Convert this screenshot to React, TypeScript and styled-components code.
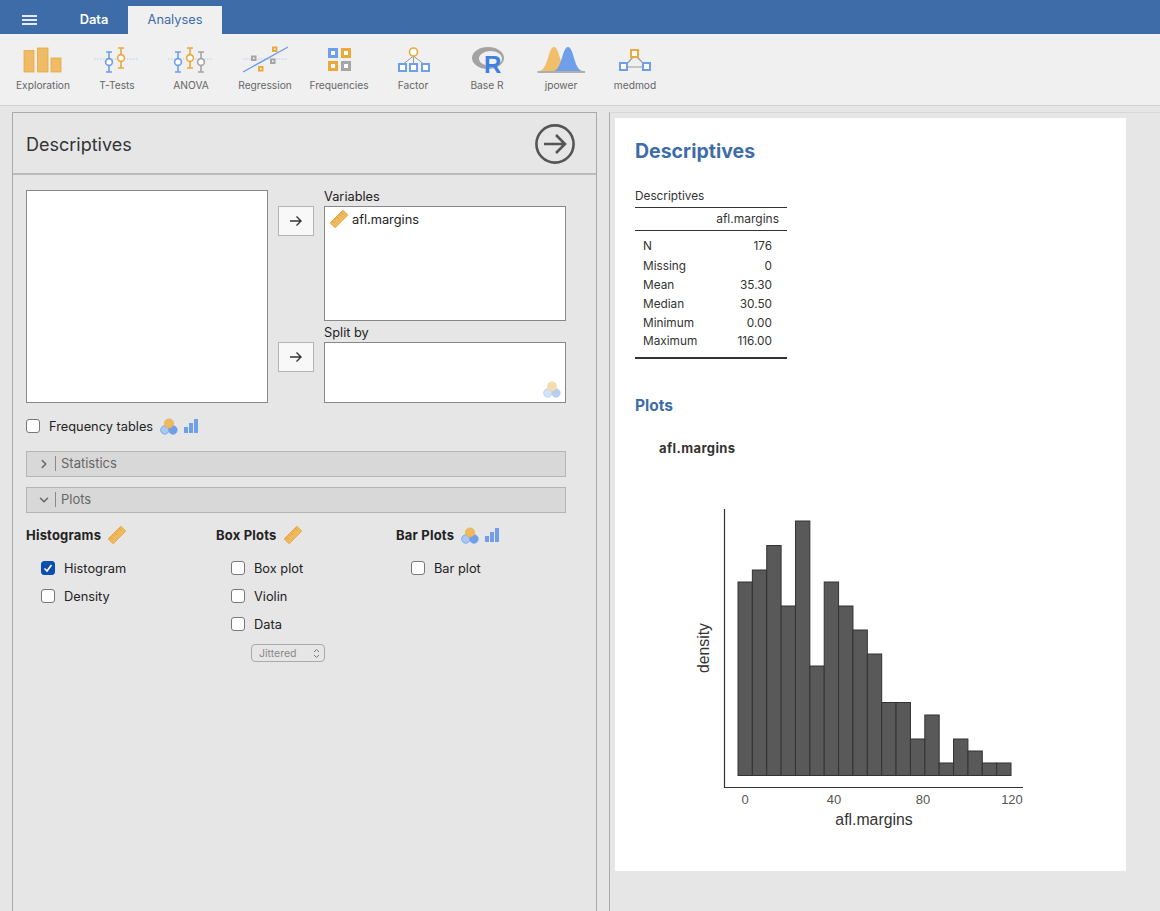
import React from "react";
import styled, { createGlobalStyle } from "styled-components";
import { ChevronDown, ChevronRight } from "lucide-react";

const GlobalStyle = createGlobalStyle`
  html, body {
    margin: 0;
    padding: 0;
    height: 911px;
    overflow: hidden;
    background: #e6e6e6;
    font-family: Inter, "Liberation Sans", sans-serif;
  }
  * { box-sizing: border-box; }
`;

const BLUE = "#6e9fe8";
const ORANGE = "#e9a93c";
const GREY = "#a5a5a5";

const TopBar = styled.header`
  height: 34px;
  background: #3e6ca8;
  display: flex;
  align-items: flex-end;
`;

const Burger = styled.div`
  width: 60px;
  height: 28px;
  padding: 9px 0 0 22px;
  display: flex;
  flex-direction: column;
  gap: 2.2px;
  span {
    display: block;
    width: 15px;
    height: 2px;
    background: #e4ebf4;
  }
`;

const Tab = styled.div<{ $active?: boolean }>`
  width: ${(p) => (p.$active ? "94px" : "68px")};
  height: 28px;
  display: flex;
  align-items: center;
  justify-content: center;
  font-size: 12.8px;
  font-weight: ${(p) => (p.$active ? 400 : 600)};
  color: ${(p) => (p.$active ? "#3e6ca8" : "#fff")};
  background: ${(p) => (p.$active ? "#f0f0f0" : "transparent")};
  padding-bottom: 2px;
`;

const Toolbar = styled.nav`
  height: 72px;
  background: #f0f0f0;
  border-bottom: 1px solid #d0d0d0;
  padding-left: 6px;
  display: flex;
`;

const ToolItem = styled.div`
  width: 74px;
  display: flex;
  flex-direction: column;
  align-items: center;
  padding-top: 10px;
  font-size: 10.2px;
  color: #666;
  svg { display: block; margin-bottom: -1.5px; }
`;

const Main = styled.main`
  display: flex;
  height: 805px;
`;

const OptionsPanel = styled.section`
  width: 585px;
  margin: 6px 0 0 12px;
  border: 1px solid #aaa;
  border-bottom: none;
  padding-bottom: 20px;
`;

const PanelHead = styled.div`
  height: 62px;
  border-bottom: 2px solid #bbb;
  padding: 1px 20px 0 13px;
  display: flex;
  align-items: center;
  justify-content: space-between;
  h2 {
    margin: 2px 0 0;
    font-size: 18px;
    font-weight: 400;
    color: #333;
  }
`;

const PanelBody = styled.div`
  padding: 15px 30px 0 13px;
`;

const Transfer = styled.div`
  display: grid;
  grid-template-columns: 242px 56px 242px;
  grid-template-rows: 136px 77px;
`;

const ListBox = styled.div<{ $h?: number }>`
  background: #fff;
  border: 1px solid #888;
  height: ${(p) => p.$h ?? 213}px;
  position: relative;
`;

const SourceBox = styled(ListBox)`
  grid-row: 1 / 3;
`;

const ArrowCell = styled.div`
  padding: 16px 0 0 10px;
`;

const ArrowButton = styled.div`
  width: 36px;
  height: 30px;
  background: #f8f8f8;
  border: 1px solid #b5b5b5;
  display: flex;
  align-items: center;
  justify-content: center;
`;

const TargetLabel = styled.div`
  height: 16px;
  font-size: 12.8px;
  line-height: 14px;
  color: #222;
`;

const VarRow = styled.div`
  display: flex;
  align-items: center;
  gap: 4px;
  padding: 3px 0 0 5px;
  font-size: 12.8px;
  color: #222;
`;

const HintIcon = styled.div`
  position: absolute;
  right: 4px;
  bottom: 4px;
  opacity: 0.5;
  line-height: 0;
`;

const CheckRow = styled.label<{ $indent?: number }>`
  display: flex;
  align-items: center;
  height: 28px;
  padding-left: ${(p) => p.$indent ?? 0}px;
  font-size: 12.8px;
  color: #222;
`;

const Box = styled.span<{ $on?: boolean }>`
  width: 14px;
  height: 14px;
  border-radius: 3px;
  border: 1px solid ${(p) => (p.$on ? "#0a4fae" : "#777")};
  background: ${(p) => (p.$on ? "#0a4fae" : "#fff")};
  margin-right: 9px;
  display: flex;
  align-items: center;
  justify-content: center;
  flex: none;
`;

const IconPair = styled.span<{ $flush?: boolean }>`
  display: inline-flex;
  align-items: center;
  gap: 6px;
  margin-left: ${(p) => (p.$flush ? 0 : 7)}px;
`;

const FreqRow = styled(CheckRow)`
  margin-top: 9px;
`;

const Section = styled.div`
  height: 26px;
  margin-top: 10px;
  background: #d8d8d8;
  border: 1px solid #b5b5b5;
  display: flex;
  align-items: center;
  padding: 0 0 1px 10px;
  font-size: 13px;
  color: #666;
  svg { margin-right: 4px; }
  span {
    border-left: 1px solid #888;
    padding-left: 5px;
    line-height: 15px;
  }
`;

const FirstSection = styled(Section)`
  margin-top: 11px;
`;

const PlotColumns = styled.div`
  display: grid;
  grid-template-columns: 190px 180px 1fr;
  margin-top: 12px;
`;

const ColHead = styled.div`
  display: flex;
  align-items: center;
  height: 20px;
  gap: 7px;
  margin-bottom: 9px;
  font-size: 13px;
  letter-spacing: 0.2px;
  font-weight: 700;
  color: #222;
`;

const Dropdown = styled.div`
  margin: 6px 0 0 35px;
  width: 74px;
  height: 18px;
  border: 1px solid #aaa;
  border-radius: 4px;
  padding: 0 4px 0 7px;
  font-size: 10.5px;
  color: #888;
  display: flex;
  align-items: center;
  justify-content: space-between;
`;

const ResultsPane = styled.section`
  width: 551px;
  margin: 6px 0 0 12px;
  border-left: 1px solid #aaa;
  border-top: 1px solid #d8d8d8;
  padding: 5px 0 0 5px;
`;

const Sheet = styled.article`
  width: 511px;
  height: 753px;
  background: #fff;
  padding: 21px 0 0 20px;
`;

const Title = styled.h1`
  margin: 0;
  font-size: 19.5px;
  line-height: 24px;
  font-weight: 700;
  color: #3e6ca8;
`;

const DataTable = styled.table`
  margin-top: 22px;
  width: 152px;
  border-collapse: collapse;
  font-size: 11.8px;
  color: #333;
  caption {
    text-align: left;
    height: 23px;
    line-height: 22px;
    border-bottom: 1px solid #333;
  }
  th {
    font-size: 12px;
    font-weight: 400;
    text-align: right;
    height: 22px;
    padding: 0 8px 0 0;
    border-bottom: 1px solid #333;
  }
  td {
    height: 19px;
    padding: 0 0 0 8px;
  }
  td:last-child {
    text-align: right;
    padding: 0 15px 0 0;
  }
  tbody tr:first-child td { padding-top: 6px; height: 26px; }
  tbody tr:last-child td { padding-bottom: 7px; height: 26px; border-bottom: 2px solid #333; }
`;

const SubTitle = styled.h2`
  margin: 37px 0 0;
  font-size: 15.5px;
  line-height: 20px;
  font-weight: 700;
  color: #3e6ca8;
`;

const PlotName = styled.div`
  margin: 22px 0 0 24px;
  font-size: 13px;
  letter-spacing: 0.4px;
  line-height: 20px;
  font-weight: 700;
  color: #333;
`;

const Chart = styled.svg`
  display: block;
  margin: 43px 0 0 45px;
`;

const Ruler = ({ size = 18 }: { size?: number }) => (
  <svg width={size} height={size} viewBox="0 0 18 18">
    <g transform="rotate(-45 9 9)">
      <rect x="0" y="5.5" width="18" height="7" fill="#efb95f" stroke="#e5a539" strokeWidth="0.8" />
      <path d="M3 5.5v3M6 5.5v2M9 5.5v3M12 5.5v2M15 5.5v3" stroke="#c98f2d" strokeWidth="0.7" />
    </g>
  </svg>
);

const Nominal = () => (
  <svg width="18" height="17" viewBox="0 0 18 17">
    <circle cx="4.8" cy="12" r="4.2" fill="#a9c8f3" stroke={BLUE} strokeWidth="0.8" />
    <circle cx="13" cy="12" r="4.2" fill={BLUE} stroke={BLUE} strokeWidth="0.8" />
    <circle cx="9" cy="5.5" r="4.6" fill="#efb95f" stroke={ORANGE} strokeWidth="0.6" />
  </svg>
);

const Bars = () => (
  <svg width="14" height="14" viewBox="0 0 14 14">
    <rect x="0" y="8" width="4" height="6" fill={BLUE} />
    <rect x="5" y="4" width="4" height="10" fill={BLUE} />
    <rect x="10" y="0" width="4" height="14" fill={BLUE} />
  </svg>
);

const MoveArrow = () => (
  <svg width="14" height="12" viewBox="0 0 14 12">
    <path d="M1 6h11M7.5 1.5 12 6l-4.5 4.5" fill="none" stroke="#333" strokeWidth="1.4" />
  </svg>
);

const GoButton = () => (
  <svg width="42" height="42" viewBox="0 0 42 42">
    <circle cx="21" cy="21" r="18.6" fill="none" stroke="#555" strokeWidth="2.6" />
    <path d="M10 21h21M22 12l9 9-9 9" fill="none" stroke="#555" strokeWidth="2.6" />
  </svg>
);

const Whisker = ({ x, y, color }: { x: number; y: number; color: string }) => (
  <g fill="none" stroke={color} strokeWidth="1.6">
    <path d={`M${x - 3} ${y - 10}h6M${x} ${y - 10}v6.5M${x} ${y + 3.5}v6.5M${x - 3} ${y + 10}h6`} />
    <circle cx={x} cy={y} r="3.4" fill="#fff" />
  </g>
);

const ToolSvg = ({ w = 60, children }: { w?: number; children: React.ReactNode }) => (
  <svg width={w} height="36" viewBox={`0 0 ${w} 36`}>
    {children}
  </svg>
);

const Dots = ({ x1, x2 }: { x1: number; x2: number }) => (
  <path d={`M${x1} 15H${x2}`} stroke="#a8c4dd" strokeWidth="0.8" strokeDasharray="1.5 1.5" />
);

const Sq = ({ x, y, s = 9, w = 2, color }: { x: number; y: number; s?: number; w?: number; color: string }) => (
  <rect x={x} y={y} width={s} height={s} fill="#fff" stroke={color} strokeWidth={w} />
);

// toolbar icons sit in a 60x36 box, y offset 44 on the page
const tools: { label: string; icon: React.ReactNode }[] = [
  {
    label: "Exploration",
    icon: (
      <ToolSvg>
        <g fill="#efbb66" stroke={ORANGE} strokeWidth="0.8">
          <rect x="11" y="6.5" width="10" height="21.5" />
          <rect x="24.5" y="4" width="10.5" height="24" />
          <rect x="38" y="14" width="10" height="14" />
        </g>
      </ToolSvg>
    ),
  },
  {
    label: "T-Tests",
    icon: (
      <ToolSvg>
        <Dots x1={7} x2={52} />
        <Whisker x={22} y={18} color={BLUE} />
        <Whisker x={34} y={14} color={ORANGE} />
      </ToolSvg>
    ),
  },
  {
    label: "ANOVA",
    icon: (
      <ToolSvg>
        <Dots x1={7} x2={52} />
        <Whisker x={17} y={18} color={BLUE} />
        <Whisker x={29} y={14} color={ORANGE} />
        <Whisker x={40} y={18} color={GREY} />
      </ToolSvg>
    ),
  },
  {
    label: "Regression",
    icon: (
      <ToolSvg>
        <Dots x1={8} x2={53} />
        <path d="M8 28 53 3" stroke={BLUE} strokeWidth="1.4" />
        <Sq x={17} y={12.5} s={3.5} color={GREY} />
        <Sq x={36} y={15.5} s={3.5} color={GREY} />
        <Sq x={38} y={3.5} s={3.5} color={ORANGE} />
        <Sq x={24} y={23} s={3.5} color={ORANGE} />
      </ToolSvg>
    ),
  },
  {
    label: "Frequencies",
    icon: (
      <ToolSvg>
        <Sq x={20.5} y={5.5} s={7} w={3} color={BLUE} />
        <Sq x={33.5} y={5.5} s={7} w={3} color={ORANGE} />
        <Sq x={20.5} y={18.5} s={7} w={3} color={ORANGE} />
        <Sq x={33.5} y={18.5} s={7} w={3} color={GREY} />
      </ToolSvg>
    ),
  },
  {
    label: "Factor",
    icon: (
      <ToolSvg>
        <path d="M30.5 12 19 21M30.5 12v8M30.5 12 42 21" stroke="#999" strokeWidth="1" />
        <circle cx="30.5" cy="8" r="4" fill="#fff" stroke={ORANGE} strokeWidth="1.6" />
        <Sq x={16} y={20} s={7} color={BLUE} />
        <Sq x={27} y={20} s={7} color={BLUE} />
        <Sq x={39} y={20} s={7} color={BLUE} />
      </ToolSvg>
    ),
  },
  {
    label: "Base R",
    icon: (
      <ToolSvg>
        <path
          d="M15 14a16 11 0 1 0 32 0a16 11 0 1 0-32 0ZM22 14.5a11.5 7.5 0 1 1 23 0a11.5 7.5 0 1 1-23 0Z"
          fill="#a3a3a3"
          fillRule="evenodd"
        />
        <text x="27" y="29" fontFamily="Liberation Sans, sans-serif" fontSize="24" fontWeight="700" fill="#3d80e4">
          R
        </text>
      </ToolSvg>
    ),
  },
  {
    label: "jpower",
    icon: (
      <ToolSvg>
        <path d="M8 27C17 27 17 3 23 3C29 3 29 27 38 27Z" fill="#efbf6c" />
        <path d="M22 27C31 27 31 3 37 3C43 3 43 27 52 27Z" fill="#6e9fe8" />
        <path d="M6.5 28H54" stroke="#999" strokeWidth="1.4" />
      </ToolSvg>
    ),
  },
  {
    label: "medmod",
    icon: (
      <ToolSvg>
        <path d="M29 12 19 23M31 12l11 11M20 23h22" stroke="#999" strokeWidth="1.2" />
        <Sq x={26} y={6} s={7} color={ORANGE} />
        <Sq x={15} y={19} s={7} color={BLUE} />
        <Sq x={38} y={19} s={7} color={BLUE} />
      </ToolSvg>
    ),
  },
];

const rows: [string, string][] = [
  ["N", "176"],
  ["Missing", "0"],
  ["Mean", "35.30"],
  ["Median", "30.50"],
  ["Minimum", "0.00"],
  ["Maximum", "116.00"],
];

// bar tops, page y minus chart origin
const heights = [81, 69, 44.5, 105, 20, 165, 81, 105, 129, 153, 201.5, 201.5, 238, 214, 262, 238, 250, 262, 262];

const Histogram = () => {
  const x0 = 58;
  const step = 14.37;
  const base = 274.5;
  const ticks: [string, number][] = [
    ["0", 65],
    ["40", 154],
    ["80", 243],
    ["120", 332],
  ];
  return (
    <Chart width="360" height="340" viewBox="0 0 360 340">
      <g fill="#595959" stroke="#333" strokeWidth="1">
        {heights.map((t, i) => (
          <rect key={i} x={x0 + i * step} y={t} width={step} height={base - t} />
        ))}
      </g>
      <path d="M44.5 8V286.5H343" fill="none" stroke="#333" strokeWidth="1.2" />
      {ticks.map(([label, x]) => (
        <text key={label} x={x} y="303" textAnchor="middle" fontFamily="Liberation Sans, sans-serif" fontSize="13" fill="#555">
          {label}
        </text>
      ))}
      <text x="194" y="324" textAnchor="middle" fontFamily="Liberation Sans, sans-serif" fontSize="15.8" fill="#333">
        afl.margins
      </text>
      <text
        transform="translate(29 147) rotate(-90)"
        textAnchor="middle"
        fontFamily="Liberation Sans, sans-serif"
        fontSize="15.8"
        fill="#333"
      >
        density
      </text>
    </Chart>
  );
};

const Check = ({ label, on, indent }: { label: string; on?: boolean; indent?: number }) => (
  <CheckRow $indent={indent}>
    <Box $on={on}>
      {on && (
        <svg width="10" height="10" viewBox="0 0 10 10">
          <path d="M1.5 5.5 4 8l4.5-6" fill="none" stroke="#fff" strokeWidth="1.6" />
        </svg>
      )}
    </Box>
    {label}
  </CheckRow>
);

export default function App() {
  return (
    <>
      <GlobalStyle />
      <TopBar>
        <Burger>
          <span />
          <span />
          <span />
        </Burger>
        <Tab>Data</Tab>
        <Tab $active>Analyses</Tab>
      </TopBar>
      <Toolbar>
        {tools.map((t) => (
          <ToolItem key={t.label}>
            {t.icon}
            {t.label}
          </ToolItem>
        ))}
      </Toolbar>
      <Main>
        <OptionsPanel>
          <PanelHead>
            <h2>Descriptives</h2>
            <GoButton />
          </PanelHead>
          <PanelBody>
            <Transfer>
              <SourceBox />
              <ArrowCell>
                <ArrowButton>
                  <MoveArrow />
                </ArrowButton>
              </ArrowCell>
              <div>
                <TargetLabel>Variables</TargetLabel>
                <ListBox $h={115}>
                  <VarRow>
                    <Ruler />
                    afl.margins
                  </VarRow>
                </ListBox>
              </div>
              <ArrowCell>
                <ArrowButton>
                  <MoveArrow />
                </ArrowButton>
              </ArrowCell>
              <div>
                <TargetLabel>Split by</TargetLabel>
                <ListBox $h={61}>
                  <HintIcon>
                    <Nominal />
                  </HintIcon>
                </ListBox>
              </div>
            </Transfer>
            <FreqRow>
              <Box />
              Frequency tables
              <IconPair>
                <Nominal />
                <Bars />
              </IconPair>
            </FreqRow>
            <FirstSection>
              <ChevronRight size={14} strokeWidth={2.6} color="#666" />
              <span>Statistics</span>
            </FirstSection>
            <Section>
              <ChevronDown size={14} strokeWidth={2.6} color="#666" />
              <span>Plots</span>
            </Section>
            <PlotColumns>
              <div>
                <ColHead>
                  Histograms
                  <Ruler />
                </ColHead>
                <Check label="Histogram" on indent={15} />
                <Check label="Density" indent={15} />
              </div>
              <div>
                <ColHead>
                  Box Plots
                  <Ruler />
                </ColHead>
                <Check label="Box plot" indent={15} />
                <Check label="Violin" indent={15} />
                <Check label="Data" indent={15} />
                <Dropdown>
                  Jittered
                  <svg width="7" height="11" viewBox="0 0 7 11">
                    <path d="M1 4 3.5 1.5 6 4M1 7l2.5 2.5L6 7" fill="none" stroke="#777" strokeWidth="1" />
                  </svg>
                </Dropdown>
              </div>
              <div>
                <ColHead>
                  Bar Plots
                  <IconPair $flush>
                    <Nominal />
                    <Bars />
                  </IconPair>
                </ColHead>
                <Check label="Bar plot" indent={15} />
              </div>
            </PlotColumns>
          </PanelBody>
        </OptionsPanel>
        <ResultsPane>
          <Sheet>
            <Title>Descriptives</Title>
            <DataTable>
              <caption>Descriptives</caption>
              <thead>
                <tr>
                  <th colSpan={2}>afl.margins</th>
                </tr>
              </thead>
              <tbody>
                {rows.map(([k, v]) => (
                  <tr key={k}>
                    <td>{k}</td>
                    <td>{v}</td>
                  </tr>
                ))}
              </tbody>
            </DataTable>
            <SubTitle>Plots</SubTitle>
            <PlotName>afl.margins</PlotName>
            <Histogram />
          </Sheet>
        </ResultsPane>
      </Main>
    </>
  );
}
